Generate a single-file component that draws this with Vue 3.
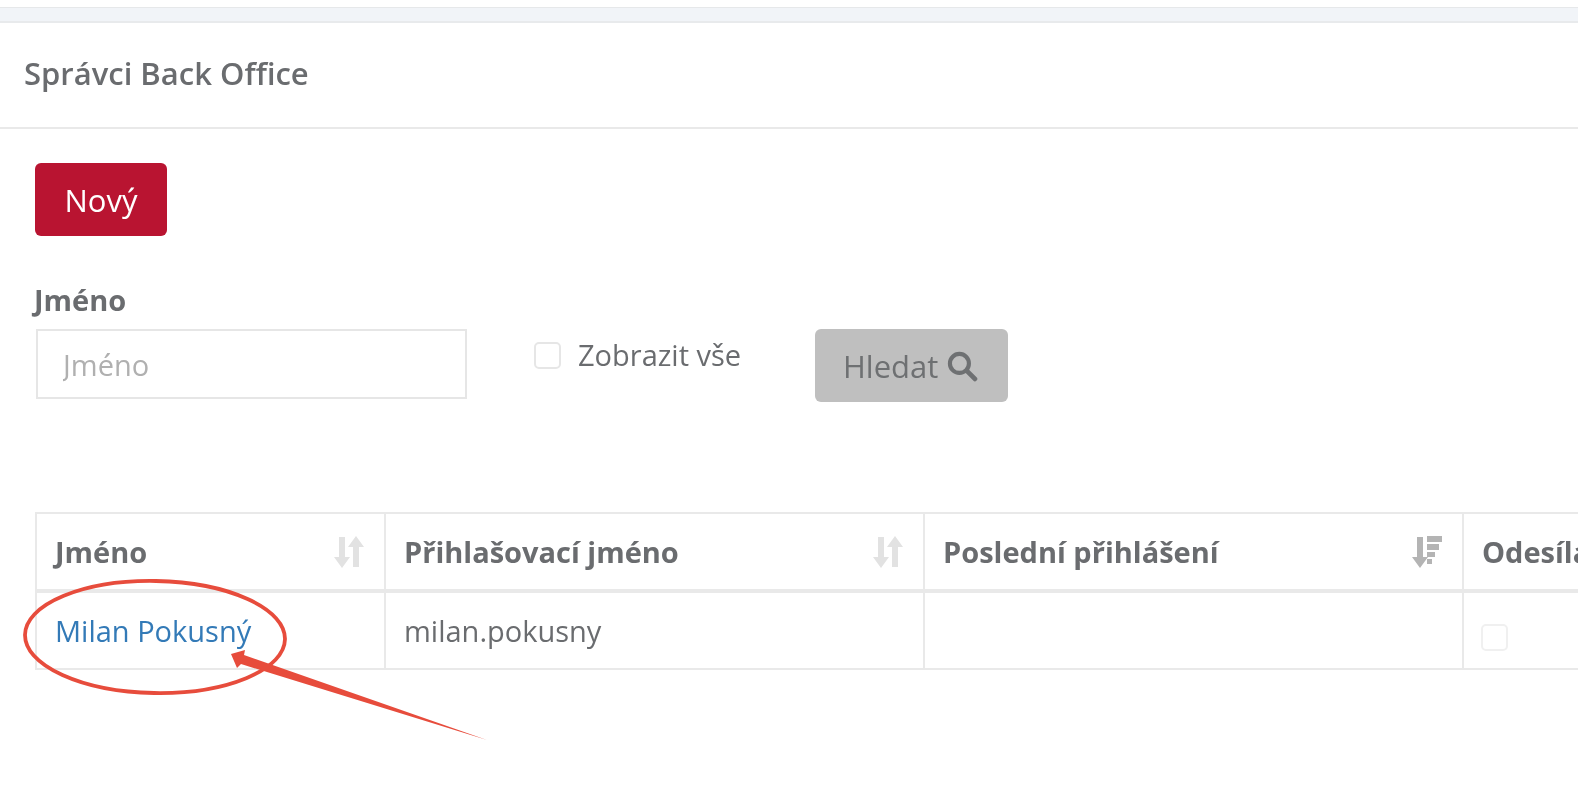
<template>
  <div class="page">
    <div class="top-strip"></div>
    <header class="panel-head">
      <h2>Správci Back Office</h2>
    </header>
    <main class="panel-body">
      <button class="btn-new" type="button">Nový</button>

      <form class="filter" @submit.prevent>
        <div class="field">
          <label for="name">Jméno</label>
          <input id="name" type="text" placeholder="Jméno" />
        </div>
        <label class="check-label">
          <span class="check"></span>
          <span>Zobrazit vše</span>
        </label>
        <button class="btn-search" type="submit">
          Hledat
          <svg width="32" height="32" viewBox="0 0 31 31" fill="none" stroke="#6e7072">
            <circle cx="13" cy="13" r="9.2" stroke-width="4" />
            <path d="M20 20l8 8" stroke-width="4.6" stroke-linecap="round" />
          </svg>
        </button>
      </form>

      <div class="table-wrap">
        <table>
          <thead>
            <tr>
              <th v-for="col in columns" :key="col.label" :style="{ width: col.width + 'px' }">
                <div class="th-inner">
                  <span>{{ col.label }}</span>
                  <svg v-if="col.sort === 'both'" width="32" height="34" viewBox="0 0 32 34" fill="#e2e2e2">
                    <path d="M6 2h6v20h5l-8 11-8-11h5z" />
                    <path d="M23 1l8 11h-5v20h-6V12h-5z" />
                  </svg>
                  <svg v-else-if="col.sort === 'desc'" width="32" height="34" viewBox="0 0 32 34" fill="#b4b4b4">
                    <path d="M6 2h6v20h5l-8 11-8-11h5z" />
                    <path d="M16 1h15v6H16zM16 9h12v6H16zM16 17h8v5h-8zM16 24h5v5h-5z" />
                  </svg>
                </div>
              </th>
            </tr>
          </thead>
          <tbody>
            <tr>
              <td><a href="#" @click.prevent>Milan Pokusný</a></td>
              <td>milan.pokusny</td>
              <td></td>
              <td><span class="check check-faint"></span></td>
            </tr>
          </tbody>
        </table>
      </div>
    </main>

    <!-- red annotation drawn over the screenshot -->
    <svg class="markup" width="1578" height="788" viewBox="0 0 1578 788" fill="none">
      <ellipse cx="155" cy="637" rx="130" ry="56" stroke="#e74c3c" stroke-width="3.8" transform="rotate(1 155 637)" />
      <path d="M231 654L245 650L244 655L487 740L241 664L237 668Z" fill="#e74c3c" />
    </svg>
  </div>
</template>

<script setup>
const columns = [
  { label: 'Jméno', width: 349, sort: 'both' },
  { label: 'Přihlašovací jméno', width: 539, sort: 'both' },
  { label: 'Poslední přihlášení', width: 539, sort: 'desc' },
  { label: 'Odesílatel', width: 300, sort: '' },
]
</script>

<style>
html,
body {
  background: #fff;
  overflow: hidden;
}
</style>

<style scoped>
.page {
  position: relative;
  width: 1578px;
  height: 788px;
  overflow: hidden;
  padding-top: 7px;
  box-sizing: border-box;
  font-family: "Open Sans", "Noto Sans", sans-serif;
  color: #6a6c6f;
}
.panel-body,
.panel-head h2 {
  filter: blur(0.5px);
}
.top-strip {
  height: 13px;
  background: #f1f4f8;
  border-top: 1px solid #e6e8ea;
  border-bottom: 2px solid #e8eaec;
}
.panel-head {
  height: 104px;
  display: flex;
  align-items: center;
  padding-left: 24px;
  border-bottom: 2px solid #e9e9e9;
}
.panel-head h2 {
  margin: -4px 0 0;
  font-size: 31px;
  font-weight: 600;
  color: #6a6c6f;
}
.panel-body {
  padding: 34px 0 0 35px;
}
.btn-new {
  display: block;
  width: 132px;
  height: 73px;
  border: 0;
  border-radius: 6px;
  background: #b91431;
  color: #fff;
  font-family: inherit;
  font-size: 31px;
}
.filter {
  display: flex;
  align-items: flex-start;
  margin-top: 46px;
}
.field {
  display: flex;
  flex-direction: column;
  width: 432px;
}
.field label {
  margin-left: -1px;
  height: 47px;
  font-size: 29px;
  font-weight: 700;
  line-height: 36px;
}
.field input {
  height: 70px;
  margin-left: 1px;
  box-sizing: border-box;
  border: 2px solid #e6e6e6;
  padding: 0 25px;
  font-family: inherit;
  font-size: 29px;
  outline: none;
}
.field input::placeholder {
  color: #b0b0b0;
}
.check-label {
  display: flex;
  align-items: center;
  gap: 17px;
  margin: 53px 0 0 67px;
  font-size: 29px;
  line-height: 40px;
}
.check {
  display: block;
  width: 27px;
  height: 27px;
  box-sizing: border-box;
  border: 2px solid #e6e6e6;
  border-radius: 5px;
  background: #fff;
}
.check-faint {
  border-color: #f0f0f0;
  margin: 14px 0 0 -1px;
}
.btn-search {
  display: flex;
  align-items: center;
  justify-content: center;
  gap: 8px;
  width: 193px;
  height: 73px;
  margin: 47px 0 0 74px;
  padding: 0 2px 0 0;
  border: 0;
  border-radius: 6px;
  background: #bfbfbf;
  color: #6e7072;
  font-family: inherit;
  font-size: 31px;
}
.table-wrap {
  margin-top: 110px;
}
table {
  border-collapse: collapse;
  table-layout: fixed;
  width: 1727px;
  font-size: 29px;
}
th,
td {
  box-sizing: border-box;
  border: 2px solid #e9e9e9;
  padding: 0 19px 0 18px;
  text-align: left;
}
th {
  height: 78px;
  font-weight: 700;
  border-bottom-width: 4px;
  color: #6a6c6f;
  white-space: nowrap;
}
td {
  height: 78px;
}
.th-inner {
  display: flex;
  align-items: center;
  justify-content: space-between;
}
a {
  color: #337ab7;
  text-decoration: none;
}
.markup {
  position: absolute;
  left: 0;
  top: 0;
  pointer-events: none;
}
</style>
